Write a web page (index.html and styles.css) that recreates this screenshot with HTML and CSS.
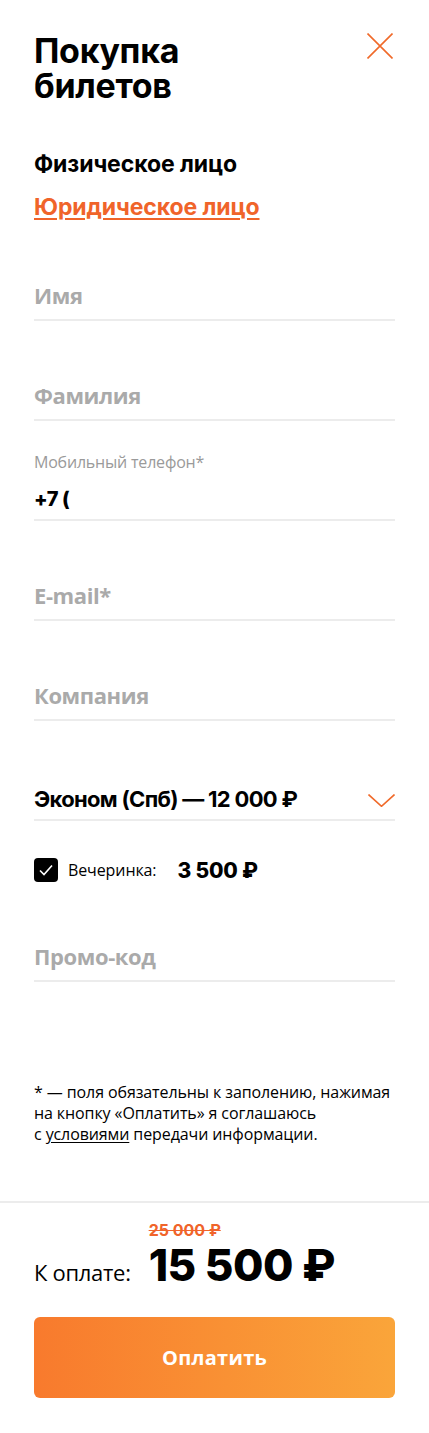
FILE: index.html
```html
<!DOCTYPE html>
<html lang="ru">
<head>
<meta charset="utf-8">
<title>Покупка билетов</title>
<link rel="stylesheet" href="styles.css">
</head>
<body>
<div class="page">
  <header class="head">
    <h1 class="title">Покупка<br>билетов</h1>
    <button class="close" aria-label="Закрыть">
      <svg width="26" height="26" viewBox="0 0 26 26"><path d="M0.5 0.5L25.5 25.5M25.5 0.5L0.5 25.5" stroke="#f06a2a" stroke-width="1.6" fill="none"/></svg>
    </button>
  </header>

  <nav class="tabs">
    <div class="tab tab-active">Физическое лицо</div>
    <a class="tab tab-link" href="#">Юридическое лицо</a>
  </nav>

  <form class="form">
    <div class="field"><span class="ph">Имя</span></div>
    <div class="field"><span class="ph">Фамилия</span></div>
    <div class="field field-filled">
      <span class="label">Мобильный телефон*</span>
      <span class="value">+7 (</span>
    </div>
    <div class="field"><span class="ph">E-mail*</span></div>
    <div class="field"><span class="ph">Компания</span></div>
    <div class="field field-select">
      <span class="value select-value">Эконом (Спб) — 12 000 ₽</span>
      <svg class="chev" width="27" height="13" viewBox="0 0 27 13"><path d="M0.5 0.5L13.5 12.3L26.5 0.5" stroke="#f06a2a" stroke-width="1.6" fill="none"/></svg>
    </div>
    <div class="check-row">
      <span class="checkbox">
        <svg width="16" height="14" viewBox="0 0 16 14"><path d="M2 7.5L6 11.5L14 2.5" stroke="#fff" stroke-width="1.6" fill="none"/></svg>
      </span>
      <span class="check-label">Вечеринка:</span>
      <span class="check-price">3 500 ₽</span>
    </div>
    <div class="field"><span class="ph">Промо-код</span></div>
  </form>

  <p class="note">* — поля обязательны к заполению, нажимая на&nbsp;кнопку «Оплатить» я&nbsp;соглашаюсь с&nbsp;<a href="#" class="note-link">условиями</a> передачи информации.</p>
</div>

<footer class="foot">
  <div class="total">
    <span class="total-label">К оплате:</span>
    <div class="prices">
      <span class="old-price">25 000 ₽</span>
      <span class="new-price">15 500 ₽</span>
    </div>
  </div>
  <button class="pay">Оплатить</button>
</footer>
</body>
</html>
```

FILE: styles.css
```css
* { box-sizing: border-box; }
html, body { margin: 0; padding: 0; background: #fff; }
body {
  font-family: "Open Sans", "Noto Sans", sans-serif;
  color: #000;
  width: 429px;
}
.page { padding: 0 34px; }

.head {
  display: flex;
  justify-content: space-between;
  align-items: flex-start;
  padding-top: 33px;
}
.title {
  margin: 0;
  font-family: Inter, "Noto Sans", sans-serif;
  font-weight: 700;
  font-size: 34px;
  line-height: 35px;
  letter-spacing: -0.3px;
}
.close {
  border: 0;
  background: none;
  padding: 0;
  margin: 0 2px 0 0;
  width: 26px;
  height: 26px;
  cursor: pointer;
}
.close svg { display: block; }

.tabs {
  display: flex;
  flex-direction: column;
  align-items: flex-start;
  gap: 15px;
  margin-top: 47px;
}
.tab {
  font-family: Inter, "Noto Sans", sans-serif;
  font-weight: 700;
  font-size: 23px;
  line-height: 28px;
  letter-spacing: -0.1px;
}
.tab-link {
  color: #f0642a;
  text-decoration: underline;
  text-decoration-thickness: 2px;
  text-underline-offset: 3px;
}

.form { display: flex; flex-direction: column; }
.field {
  height: 100px;
  border-bottom: 2px solid #ececec;
  display: flex;
  flex-direction: column;
  justify-content: flex-end;
  padding-bottom: 10px;
}
.ph {
  font-family: "Open Sans", sans-serif;
  font-weight: 700;
  font-size: 22px;
  line-height: 28px;
  color: #aaaaaa;
  letter-spacing: -0.4px;
}
.field-filled { padding-bottom: 7px; }
.label {
  font-size: 16px;
  line-height: 20px;
  color: #9a9a9a;
  letter-spacing: -0.2px;
  margin-bottom: 14px;
}
.value {
  font-family: Inter, "Noto Sans", sans-serif;
  font-weight: 800;
  font-size: 20px;
  line-height: 26px;
  letter-spacing: -0.4px;
}
.field-select {
  flex-direction: row;
  align-items: flex-end;
  justify-content: space-between;
  padding-bottom: 7px;
}
.select-value {
  font-weight: 700;
  font-size: 22px;
  letter-spacing: -0.7px;
}
.chev { display: block; margin-bottom: 5px; }

.check-row {
  display: flex;
  align-items: center;
  height: 24px;
  margin-top: 37px;
}
.checkbox {
  width: 24px;
  height: 24px;
  border-radius: 4px;
  background: #000;
  display: flex;
  align-items: center;
  justify-content: center;
}
.check-label {
  font-size: 16px;
  letter-spacing: -0.1px;
  margin-left: 10px;
}
.check-price {
  font-family: Inter, "Noto Sans", sans-serif;
  font-weight: 800;
  font-size: 21px;
  letter-spacing: -0.2px;
  margin-left: 21px;
}

.note {
  margin: 100px 0 0;
  font-size: 16px;
  line-height: 21px;
  letter-spacing: -0.1px;
}
.note-link { color: #000; text-decoration: underline; text-underline-offset: 2px; }

.foot {
  margin-top: 56px;
  border-top: 2px solid #ececec;
  padding: 19px 34px 0;
}
.total {
  display: flex;
  align-items: flex-end;
}
.total-label {
  font-size: 22px;
  line-height: 28px;
  letter-spacing: -0.3px;
  margin-bottom: 6px;
}
.prices {
  display: flex;
  flex-direction: column;
  align-items: flex-start;
  margin-left: 18px;
}
.old-price {
  font-family: Inter, "Noto Sans", sans-serif;
  font-weight: 700;
  font-size: 16px;
  line-height: 16px;
  color: #f0642a;
  text-decoration: line-through;
}
.new-price {
  font-family: Inter, "Noto Sans", sans-serif;
  font-weight: 800;
  font-size: 44px;
  line-height: 54px;
  letter-spacing: -0.5px;
}
.pay {
  display: block;
  width: 100%;
  height: 81px;
  margin-top: 25px;
  border: 0;
  border-radius: 6px;
  background: linear-gradient(90deg, #f87a2d 0%, #faa53a 100%);
  color: #fff;
  font-family: "Open Sans", sans-serif;
  font-weight: 700;
  font-size: 20px;
  letter-spacing: 0.3px;
  cursor: pointer;
}
```
